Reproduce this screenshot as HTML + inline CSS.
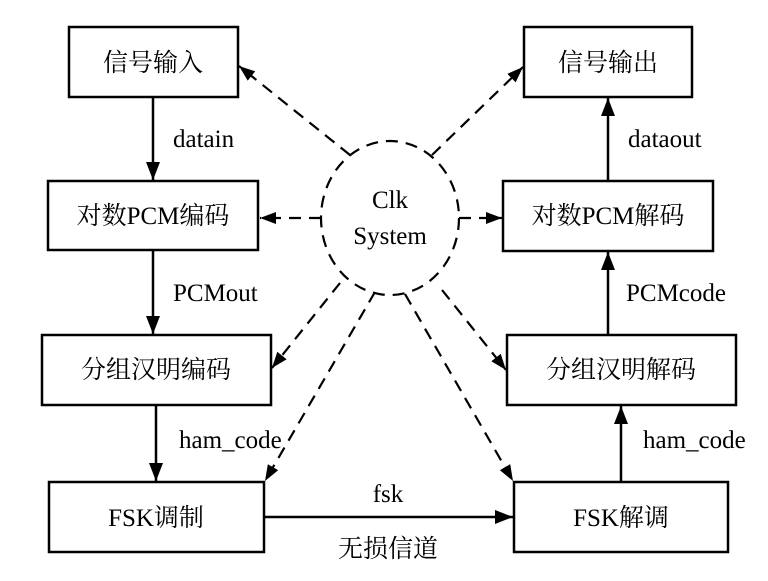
<!DOCTYPE html>
<html><head><meta charset="utf-8"><style>body{margin:0;background:#fff}svg{display:block}
text{font-family:"Liberation Serif","Noto Serif CJK SC",serif;font-size:25px;fill:#000}</style></head>
<body>
<svg width="768" height="581" viewBox="0 0 768 581" xmlns="http://www.w3.org/2000/svg">
<defs>
<marker id="b" viewBox="0 0 18 14" refX="18" refY="7" markerWidth="18" markerHeight="14" markerUnits="userSpaceOnUse" orient="auto"><path d="M0,0L18,7L0,14z" fill="#000"/></marker>
<marker id="d" viewBox="0 0 16 12" refX="16" refY="6" markerWidth="16" markerHeight="12" markerUnits="userSpaceOnUse" orient="auto"><path d="M0,0L16,6L0,12z" fill="#000"/></marker>
</defs>
<g fill="none" stroke="#000" stroke-width="2.5">
<rect x="69" y="27" width="169" height="70"/>
<rect x="48" y="181" width="210" height="69"/>
<rect x="42" y="335" width="229" height="70"/>
<rect x="49" y="482" width="215" height="70"/>
<rect x="524" y="27" width="168" height="70"/>
<rect x="503" y="181" width="210" height="70"/>
<rect x="507" y="335" width="229" height="70"/>
<rect x="514" y="482" width="214" height="70"/>
<line x1="153" y1="97" x2="153" y2="180" marker-end="url(#b)"/>
<line x1="153" y1="250" x2="153" y2="334" marker-end="url(#b)"/>
<line x1="156" y1="405" x2="156" y2="481" marker-end="url(#b)"/>
<line x1="264" y1="517" x2="513" y2="517" marker-end="url(#b)"/>
<line x1="621" y1="482" x2="621" y2="406" marker-end="url(#b)"/>
<line x1="608" y1="335" x2="608" y2="252" marker-end="url(#b)"/>
<line x1="608" y1="181" x2="608" y2="98" marker-end="url(#b)"/>
</g>
<g fill="none" stroke="#000" stroke-width="2.2" stroke-dasharray="12,8">
<ellipse cx="390" cy="218" rx="69" ry="77"/>
<line x1="350" y1="155" x2="239" y2="66" marker-end="url(#d)"/>
<line x1="432" y1="155" x2="523" y2="67" marker-end="url(#d)"/>
<line x1="321" y1="218" x2="260" y2="218" marker-end="url(#d)"/>
<line x1="459" y1="218" x2="502" y2="218" marker-end="url(#d)"/>
<line x1="340" y1="283" x2="272" y2="368" marker-end="url(#d)"/>
<line x1="375" y1="292" x2="265" y2="481" marker-end="url(#d)"/>
<line x1="442" y1="290" x2="506" y2="370" marker-end="url(#d)"/>
<line x1="405" y1="294" x2="513" y2="481" marker-end="url(#d)"/>
</g>
<g text-anchor="middle">
<text x="153" y="71">信号输入</text>
<text x="153" y="224">对数PCM编码</text>
<text x="156" y="378">分组汉明编码</text>
<text x="156" y="526">FSK调制</text>
<text x="608" y="71">信号输出</text>
<text x="608" y="224">对数PCM解码</text>
<text x="621" y="378">分组汉明解码</text>
<text x="621" y="526">FSK解调</text>
<text x="390" y="208">Clk</text>
<text x="390" y="244">System</text>
<text x="388" y="502">fsk</text>
<text x="388" y="557">无损信道</text>
</g>
<text x="173" y="147">datain</text>
<text x="173" y="301">PCMout</text>
<text x="179" y="448">ham_code</text>
<text x="628" y="147">dataout</text>
<text x="626" y="301">PCMcode</text>
<text x="643" y="448">ham_code</text>
</svg>
</body></html>
